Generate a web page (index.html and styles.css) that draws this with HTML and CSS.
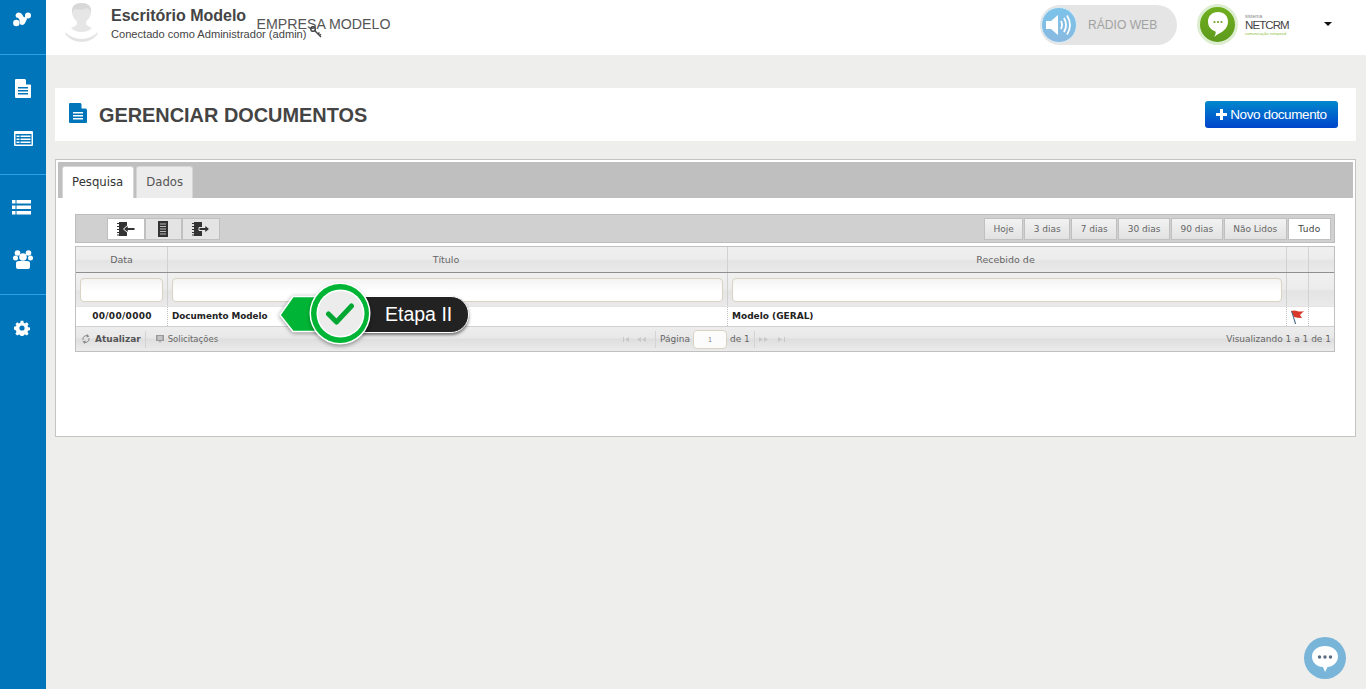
FILE: index.html
```html
<!DOCTYPE html>
<html lang="pt">
<head>
<meta charset="utf-8">
<title>Gerenciar Documentos</title>
<link rel="stylesheet" href="styles.css">
</head>
<body>
<div class="app">
  <nav class="sidebar">
    <div class="side-group side-logo">
      <svg width="18" height="15" viewBox="0 0 18 15"><circle cx="3.300" cy="11" r="3.200" fill="#fff"/><circle cx="15" cy="3.500" r="3" fill="#fff"/><path d="M2.500 3.500Q3 .5 6 .5q2.500 0 3.500 2.500l1.500 2.500 2-1.500 1 3-1.500 3q-1 3-3.500 3-2 0-2.500-2.500Q7 7 5 6 2.500 5.500 2.500 3.500z" fill="#fff"/></svg>
    </div>
    <div class="side-group side-two">
      <svg width="16" height="19" viewBox="0 0 16 19"><path d="M0 1a1 1 0 0 1 1-1h9l6 6v12a1 1 0 0 1-1 1H1a1 1 0 0 1-1-1z" fill="#fff"/><path d="M11 0l5 5.500h-5z" fill="#0075b9"/><path d="M3 8h10v1.600H3zM3 11h10v1.600H3zM3 14h10v1.600H3z" fill="#0075b9"/></svg>
      <svg width="19" height="15" viewBox="0 0 19 15"><rect width="19" height="15" rx="1" fill="#fff"/><rect x="1.500" y="3" width="16" height="10.500" fill="#0075b9"/><path d="M2.500 4.500h3v1.500h-3zM6.500 4.500h10v1.500h-10zM2.500 7.500h3v1.500h-3zM6.500 7.500h10v1.500h-10zM2.500 10.500h3v1.500h-3zM6.500 10.500h10v1.500h-10z" fill="#fff"/></svg>
    </div>
    <div class="side-group side-two side-people">
      <svg class="ico-list" width="19" height="15" viewBox="0 0 19 15"><path d="M0 0h3.500v3.500H0zM4.500 0H19v3.500H4.500zM0 5.500h3.500V9H0zM4.500 5.500H19V9H4.500zM0 11h3.500v3.500H0zM4.500 11H19v3.500H4.500z" fill="#fff"/></svg>
      <svg class="ico-people" width="20" height="19" viewBox="0 0 20 19"><g fill="#fff"><circle cx="4.500" cy="3" r="2.800"/><circle cx="15.500" cy="3" r="2.800"/><circle cx="2.500" cy="8" r="2.500"/><circle cx="17.500" cy="8" r="2.500"/><circle cx="10" cy="7" r="3.800"/><path d="M3 13q0-2 3-2h8q3 0 3 2v4q0 2-2 2H5q-2 0-2-2z"/></g></svg>
    </div>
    <div class="side-group side-gear">
      <svg width="16" height="16" viewBox="0 0 16 16"><path d="M6.500 0h3l.4 2.200 1.500.7L13.300 1.600l2.100 2.100-1.300 1.900.7 1.500 2.200.4v3l-2.200.4-.7 1.500 1.300 1.900-2.100 2.100-1.900-1.300-1.500.7-.4 2.200h-3l-.4-2.200-1.500-.7-1.900 1.300-2.100-2.100 1.300-1.900-.7-1.500L-1 9.500v-3l2.200-.4.700-1.500L.6 3.700l2.100-2.100 1.900 1.300 1.500-.7z" fill="#fff" transform="translate(.8 .8) scale(.9)"/><circle cx="8" cy="8" r="2.600" fill="#0075b9"/></svg>
    </div>
  </nav>
  <div class="main">
    <header class="topbar">
      <div class="user">
        <svg class="avatar" width="33" height="39" viewBox="0 0 33 39"><path d="M0 29q7 7 16.500 7T33 29l-1 3q-6 7-15.500 7T1 32z" fill="#e3e3e3"/><path d="M6 25q5-2 6-4 0-2-.5-3Q7 14 7 9q0-9 9.500-9T26 9q0 5-4.500 9-.5 1-.5 3 1 2 6 4-4 4-10.500 4T6 25z" fill="#e6e6e6"/><path d="M7 10Q6 0 16.500 0T26 10q-1-4-4-5-5 3-12 1-2 1-3 4z" fill="#d8d8d8"/></svg>
        <div class="user-text">
          <div class="user-name">Escritório Modelo</div>
          <div class="user-sub">Conectado como Administrador (admin)</div>
        </div>
        <span class="company">EMPRESA MODELO</span>
        <svg class="key" width="12" height="12" viewBox="0 0 12 12"><circle cx="3" cy="3" r="2.300" fill="none" stroke="#444" stroke-width="1.500"/><path d="M4.600 4.600l6.400 6.400M8 8l1.500-1.500M9.500 9.500l1.300-1.300" stroke="#444" stroke-width="1.400" fill="none"/></svg>
      </div>
      <div class="top-right">
        <div class="radio">
          <span class="radio-ico">
            <svg width="26" height="22" viewBox="0 0 26 22"><path d="M0 7h5l7-6v20l-7-6H0z" fill="#fff"/><path d="M15 7q2 4 0 8M18 4q4 7 0 14M21 1.500q6 9.500 0 19" stroke="#fff" stroke-width="1.800" fill="none"/></svg>
          </span>
          <span class="radio-label">RÁDIO WEB</span>
        </div>
        <div class="crm">
          <span class="crm-ico">
            <svg width="20" height="25" viewBox="0 0 20 25"><path d="M10 0c6 0 10 4 10 9.500 0 6-4 9.500-8 11.500-2 1-4 2.500-6 4 1.500-2.500 2-4 1.500-5.500C3 18 0 14.500 0 9.500 0 4 4 0 10 0z" fill="#fff"/><circle cx="6.500" cy="10" r="1.100" fill="#6ea51f"/><circle cx="10" cy="10" r="1.100" fill="#6ea51f"/><circle cx="13.500" cy="10" r="1.100" fill="#6ea51f"/></svg>
          </span>
          <div class="crm-text">
            <span class="crm-small">sistema</span>
            <span class="crm-name">NETCRM</span>
            <span class="crm-green">comunicação netspeed</span>
          </div>
        </div>
        <span class="caret"></span>
      </div>
    </header>
    <main class="content">
      <section class="title-card">
        <div class="title-left">
          <svg width="18" height="20" viewBox="0 0 18 20"><path d="M0 1a1 1 0 0 1 1-1h10.500L18 6.500V19a1 1 0 0 1-1 1H1a1 1 0 0 1-1-1z" fill="#0075b9"/><path d="M12.500 0L18 5.500h-5.500z" fill="#fff"/><path d="M4 9h10v1.500H4zM4 12h10v1.500H4zM4 15h10v1.500H4z" fill="#fff"/></svg>
          <h1>GERENCIAR DOCUMENTOS</h1>
        </div>
        <button class="btn-new"><span class="plus"></span>Novo documento</button>
      </section>
      <section class="panel">
        <div class="tabs">
          <span class="tab tab-on">Pesquisa</span>
          <span class="tab">Dados</span>
        </div>
        <div class="panel-body">
          <div class="toolbar">
            <div class="tool-icons">
              <span class="tool tool-on"><svg width="18" height="14" viewBox="0 0 18 14"><use href="#book"/><path d="M18 5.500H11V3L6.500 7l4.500 4V8.500h7z" fill="#333" stroke="#fff"/></svg></span>
              <span class="tool"><svg width="18" height="16" viewBox="0 0 18 16"><path d="M4 0h10v16H4z" fill="#333"/><path d="M6 2.500h6v1H6zM6 5h6v1H6zM6 7.500h6v1H6zM6 10h6v1H6zM6 12.500h6v1H6z" fill="#bbb"/></svg></span>
              <span class="tool"><svg width="18" height="14" viewBox="0 0 18 14"><use href="#book"/><path d="M7 5.500h6V3l4.500 4-4.500 4V8.500H7z" fill="#333" stroke="#e4e4e4"/></svg></span>
            </div>
            <div class="filters">
              <span class="filter">Hoje</span>
              <span class="filter">3 dias</span>
              <span class="filter">7 dias</span>
              <span class="filter">30 dias</span>
              <span class="filter">90 dias</span>
              <span class="filter">Não Lidos</span>
              <span class="filter filter-on">Tudo</span>
            </div>
          </div>
          <div class="grid">
            <div class="row head">
              <div class="c c1">Data</div><div class="c c2">Título</div><div class="c c3">Recebido de</div><div class="c c4"></div><div class="c c5"></div>
            </div>
            <div class="row search">
              <div class="c c1"><span class="inp"></span></div><div class="c c2"><span class="inp"></span></div><div class="c c3"><span class="inp"></span></div><div class="c c4"></div><div class="c c5"></div>
            </div>
            <div class="row data">
              <div class="c c1 center">00/00/0000</div><div class="c c2">Documento Modelo</div><div class="c c3">Modelo (GERAL)</div>
              <div class="c c4"><svg width="15" height="14" viewBox="0 0 15 14"><path d="M1 1q3-1 6 0t7 0L10 5l2 3Q7 8 4 7L1 1z" fill="#d9372a"/><path d="M1 1l4 13h1.200L2 1z" fill="#4a6a80"/></svg></div>
              <div class="c c5"></div>
            </div>
            <div class="pager">
              <div class="pager-left">
                <svg width="10" height="10" viewBox="0 0 10 10"><path d="M2 6a3.500 3.500 0 0 1 5-4M8 4a3.500 3.500 0 0 1-5 4" stroke="#888" fill="none"/><path d="M6 0l2.500 2.500L5.500 3.500zM4 10L1.500 7.500l3-1z" fill="#888"/></svg>
                <b>Atualizar</b>
                <span class="sep"></span>
                <svg class="ico-req" width="10" height="10" viewBox="0 0 10 10"><path d="M1 1h8v6H6l-1 2-1-2H1z" fill="#999"/><path d="M2.500 3h5M2.500 5h5" stroke="#eee"/></svg>
                <span class="req">Solicitações</span>
              </div>
              <div class="pager-mid">
                <svg width="28" height="7" viewBox="0 0 28 7"><path d="M0 1h1v5H0zM6 1v5L2 3.500zM18 1v5l-4-2.500zM23 1v5l-4-2.500z" fill="#c8c8c8"/></svg>
                <span class="sep"></span>
                <span>Página</span>
                <span class="page-inp">1</span>
                <span>de 1</span>
                <span class="sep"></span>
                <svg width="28" height="7" viewBox="0 0 28 7"><path d="M0 1v5l4-2.500zM5 1v5l4-2.500zM19 1v5l4-2.500zM25 1h1v5h-1z" fill="#c8c8c8"/></svg>
              </div>
              <div class="pager-right">Visualizando 1 a 1 de 1</div>
            </div>
          </div>
        </div>
      </section>
    </main>
  </div>
</div>
<div class="tour">
  <span class="tour-label">Etapa II</span>
  <svg class="tour-arrow" width="40" height="50" viewBox="0 0 40 50"><path d="M1 25L14 6.500h26v35H14z" fill="#00b535" stroke="#fff" stroke-width="1.500"/></svg>
  <span class="tour-circle">
    <span class="tour-inner">
      <svg width="30" height="24" viewBox="0 0 30 24"><path d="M3.500 12l8 8L26.500 4" fill="none" stroke="#00a733" stroke-width="5" stroke-linecap="round" stroke-linejoin="round"/></svg>
    </span>
  </span>
</div>
<div class="chat">
  <svg width="26" height="27" viewBox="0 0 26 27"><path d="M13 0c7.500 0 13 4.500 13 10.500S20.500 21 15.500 21L13 26l-2-5C5 21 0 16.500 0 10.500S5.500 0 13 0z" fill="#fff"/><circle cx="7.500" cy="11" r="1.700" fill="#5a6b80"/><circle cx="13" cy="11" r="1.700" fill="#5a6b80"/><circle cx="18.500" cy="11" r="1.700" fill="#5a6b80"/></svg>
</div>
<svg class="defs" width="0" height="0"><defs><g id="book"><path d="M2 0h8v14H2z" fill="#333"/><path d="M0 1.500h3M0 4.500h3M0 7.500h3M0 10.500h3M0 13h3" stroke="#333"/></g></defs></svg>
</body>
</html>
```
FILE: styles.css
```css
* { box-sizing: border-box; }
html, body { margin: 0; height: 100%; overflow: hidden; }
body { font-family: "Liberation Sans", Arial, sans-serif; color: #444; background: #eeeeec; }
.app { display: flex; height: 689px; }
.defs { position: absolute; }

.sidebar { width: 46px; flex: none; background: #0075b9; display: flex; flex-direction: column; }
.side-group { display: flex; flex-direction: column; align-items: center; border-bottom: 1px solid #2f9fe6; }
.side-logo { height: 55px; padding: 12px 2px 0 0; }
.side-two { height: 120px; padding-top: 24px; gap: 33px; }
.side-people { padding-top: 25px; gap: 35px; }
.ico-list { margin-right: 3px; flex: none; }
.ico-people { flex: none; margin-right: 1px; }
.side-gear { border-bottom: 0; padding: 25px 2px 0 0; }

.main { flex: 1; min-width: 0; display: flex; flex-direction: column; }
.topbar { height: 55px; background: #fff; display: flex; justify-content: space-between; }
.user { display: flex; align-items: flex-start; padding-left: 19px; position: relative; }
.avatar { margin-top: 3px; }
.user-text { margin-left: 13px; padding-top: 6px; }
.user-name { font-size: 16px; line-height: 19px; font-weight: bold; color: #444; white-space: nowrap; }
.user-sub { font-size: 11.100px; line-height: 14px; margin-top: 2px; color: #444; white-space: nowrap; }
.company { font-size: 14.200px; line-height: 16px; color: #555; margin: 16px 0 0 -50px; white-space: nowrap; }
.key { position: absolute; left: 264px; top: 26px; }

.top-right { display: flex; align-items: flex-start; }
.radio { width: 137px; height: 40px; margin-top: 5px; border-radius: 20px; background: #e5e5e5; display: flex; align-items: center; padding-left: 1px; }
.radio-ico { width: 36px; height: 36px; border-radius: 50%; background: linear-gradient(#7cc3ea, #89b9e0); border: 1px solid #d9ecf6; display: flex; align-items: center; justify-content: center; }
.radio-label { margin-left: 11px; font-size: 12.100px; color: #a2a2a2; white-space: nowrap; }
.crm { display: flex; margin-left: 20px; margin-top: 4px; }
.crm-ico { width: 41px; height: 41px; border-radius: 50%; background: linear-gradient(#6fae1e, #5e9a1c); border: 3px solid #dcedd0; display: flex; align-items: center; justify-content: center; }
.crm-text { margin-left: 7px; display: flex; flex-direction: column; padding-top: 10px; width: 45px; }
.crm-small { font-size: 5px; line-height: 5px; color: #888; }
.crm-name { font-size: 11.500px; line-height: 12px; color: #444; letter-spacing: -.9px; white-space: nowrap; }
.crm-green { font-size: 4px; line-height: 5px; color: #8bbf3c; white-space: nowrap; }
.caret { margin: 22px 34px 0 34px; width: 0; height: 0; border-left: 4px solid transparent; border-right: 4px solid transparent; border-top: 4px solid #111; }

.content { flex: 1; padding: 33px 10px 0 9px; }
.title-card { height: 53px; background: #fff; display: flex; justify-content: space-between; align-items: center; padding: 0 18px 0 14px; }
.title-left { display: flex; align-items: center; gap: 12px; }
.title-left svg { margin-top: -3px; }
h1 { margin: 0; font-size: 19.900px; font-weight: bold; color: #444; line-height: 24px; }
.btn-new { width: 133px; height: 27px; padding: 0; border: 0; border-radius: 3px; background: linear-gradient(#0088cc, #0044cc); color: #fff; font: 13.500px/27px "Liberation Sans", Arial, sans-serif; letter-spacing: -.4px; display: flex; align-items: center; justify-content: center; }
.plus { width: 11px; height: 11px; margin-right: 3px; background: linear-gradient(#fff, #fff) center/11px 3px no-repeat, linear-gradient(#fff, #fff) center/3px 11px no-repeat; }

.panel { height: 278px; margin-top: 18px; background: #fff; border: 1px solid #c4c4c4; padding: 2px; }
.tabs { height: 36px; background: #bfbfbf; padding: 4px 0 0 4px; display: flex; gap: 2px; }
.tab { height: 32px; padding: 0 9px; background: #ececec; border: 1px solid #d6d6d6; border-bottom: 0; border-radius: 3px 3px 0 0; font: 11.700px/30px "DejaVu Sans", Verdana, sans-serif; color: #555; }
.tab-on { background: #fff; color: #333; padding-right: 10px; }
.panel-body { padding: 16px 18px 0 17px; }

.toolbar { height: 29px; background: #d0d0d0; border: 1px solid #bdbdbd; display: flex; justify-content: space-between; padding: 3px 3px 0 31px; }
.tool-icons { display: flex; }
.tool { width: 37.500px; height: 22px; background: #e4e4e4; border: 1px solid #c0c0c0; display: flex; align-items: center; justify-content: center; }
.tool-on { background: #fff; }
.filters { display: flex; }
.filter { height: 22px; padding: 0 8.500px; background: linear-gradient(#f2f2f2, #e2e2e2); border: 1px solid #c0c0c0; margin-left: 1px; font: 9px/20px "DejaVu Sans", Verdana, sans-serif; color: #666; white-space: nowrap; }
.filter-on { background: #fff; color: #444; letter-spacing: .3px; padding: 0 9.500px; }

.grid { margin-top: 3px; height: 106px; border: 1px solid #c0c0c0; display: flex; flex-direction: column; font: 9.500px/12px "DejaVu Sans", Verdana, sans-serif; }
.row { display: flex; }
.c { flex: none; display: flex; align-items: center; padding: 0 4px; }
.c1 { width: 92px; }
.c2 { width: 560px; }
.c3 { width: 559px; }
.c4 { width: 22px; }
.c5 { flex: 1; }
.head, .search { background: linear-gradient(#f0f0f0 0, #ececec 48%, #e4e4e4 55%, #eaeaea 100%); }
.head { height: 26px; border-bottom: 1px solid #8f8f8f; color: #666; }
.head .c, .search .c { border-right: 1px solid #d2d2d2; justify-content: center; }
.head .c:last-child, .search .c:last-child { border-right: 0; }
.head .c2, .head .c3 { padding-right: 7px; }
.search { height: 33px; }
.inp { display: block; width: 100%; height: 24px; background: linear-gradient(#f4f4f4, #fff 60%); border: 1px solid #d9d3c3; border-radius: 4px; }
.data { height: 21px; background: #fff; font-size: 9px; font-weight: bold; color: #222; border-top: 1px solid #e4e4e4; border-bottom: 1px solid #d0d0d0; }
.data .c { border-right: 1px dotted #c0c0c0; padding-bottom: 2px; }
.data .c:last-child { border-right: 0; }
.data .c2 { font-size: 8.800px; }
.data .center { justify-content: center; letter-spacing: .3px; padding-left: 5px; }
.data .c4 { padding: 0 3px; }
.pager { flex: 1; display: flex; align-items: center; justify-content: space-between; padding: 0 3px 0 5px; position: relative; background: linear-gradient(#ededed, #e8e8e8 45%, #dedede 50%, #ececec); color: #666; font-size: 9px; }
.pager-left, .pager-mid { display: flex; align-items: center; gap: 3px; white-space: nowrap; }
.pager-left b { color: #555; font-size: 9px; margin-left: 1px; }
.req { font-size: 8.500px; }
.ico-req { margin-left: 5px; }
.sep { width: 1px; height: 17px; background: #d4d4d4; margin: 0 1px; }
.pager-mid { position: absolute; left: 547px; }
.page-inp { width: 34px; height: 19px; background: #fcfcfc; border: 1px solid #d9d3c3; border-radius: 4px; font-size: 7px; line-height: 18px; text-align: center; color: #888; }
.pager-right { white-space: nowrap; }

.tour { position: absolute; left: 279px; top: 281px; width: 190px; height: 68px; }
.tour-label { position: absolute; left: 67px; top: 15px; width: 123px; height: 37px; background: #222; border: 1.500px solid #fff; border-radius: 0 18px 18px 0; box-shadow: 0 2px 3px rgba(0, 0, 0, .5); color: #fff; font-size: 19.500px; line-height: 35px; padding-left: 38px; white-space: nowrap; }
.tour-arrow { position: absolute; left: 0; top: 9px; filter: drop-shadow(0 1px 2px rgba(0, 0, 0, .4)); }
.tour-circle { position: absolute; left: 32px; top: 3px; width: 58px; height: 59px; border-radius: 50%; background: #00b535; box-shadow: 0 0 0 1.500px #fff, 0 2px 4px 1px rgba(0, 0, 0, .4); display: flex; align-items: center; justify-content: center; }
.tour-inner { width: 45px; height: 45px; border-radius: 50%; background: #ececec; box-shadow: 0 0 0 1.500px #fff; display: flex; align-items: center; justify-content: center; }

.chat { position: absolute; right: 20px; bottom: 10px; width: 42px; height: 42px; border-radius: 50%; background: #78b5d8; display: flex; align-items: center; justify-content: center; padding-top: 2px; }
```
